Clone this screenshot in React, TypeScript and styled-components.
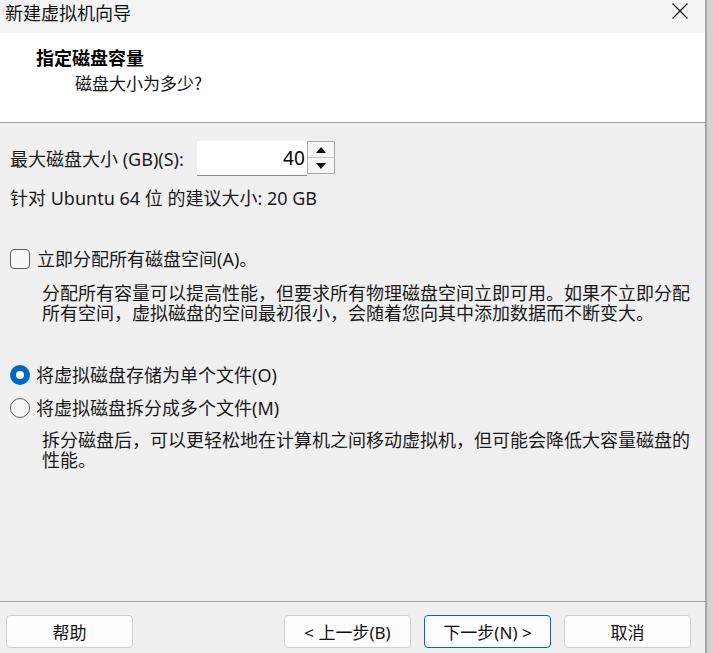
import React from 'react';
import styled, { createGlobalStyle } from 'styled-components';

const GlobalStyle = createGlobalStyle`
  html, body {
    margin: 0;
    padding: 0;
    background: #d2d2d2;
    font-family: "Noto Sans", "Noto Sans CJK SC", sans-serif;
    color: #1a1a1a;
    overflow: hidden;
  }
`;

// Window frame
const Window = styled.div`
  width: 705px;
  height: 653px;
  border-right: 2px solid #a6a6a6;
  display: flex;
  flex-direction: column;
  background: #f0f0f0;
  overflow: hidden;
`;

const TitleBar = styled.div`
  height: 33px;
  flex-shrink: 0;
  background: #f3f3f3;
  display: flex;
  justify-content: space-between;
  align-items: flex-start;
  padding: 0 17px 0 5px;
`;

const TitleText = styled.div`
  font-family: "Noto Sans CJK SC", sans-serif;
  font-size: 18px;
  line-height: 24px;
  color: #111;
`;

const CloseButton = styled.div`
  width: 16px;
  height: 16px;
  margin-top: 3px;
  display: flex;
`;

// Header panel
const Header = styled.div`
  height: 90px;
  box-sizing: border-box;
  flex-shrink: 0;
  background: #fff;
  border-bottom: 1px solid #a0a0a0;
  padding: 12px 0 0 36px;
`;

const HeaderTitle = styled.div`
  font-family: "Noto Sans CJK SC", sans-serif;
  font-weight: 700;
  font-size: 18px;
  line-height: 24px;
  color: #000;
`;

const HeaderSub = styled.div`
  font-family: "Noto Sans CJK SC", sans-serif;
  font-size: 17px;
  line-height: 22px;
  margin: 3px 0 0 39px;
  color: #111;
`;

// Main body
const Body = styled.div`
  flex: 1;
  display: flex;
  flex-direction: column;
  padding-left: 10px;
`;

const Row = styled.div<{ $top: number }>`
  display: flex;
  align-items: center;
  margin-top: ${(p) => p.$top}px;
  font-size: 18px;
  line-height: 20px;
  white-space: nowrap;
`;

const FieldLabel = styled.span`
  margin-right: 13px;
`;

const SpinBox = styled.div`
  display: flex;
  height: 35px;
`;

const SpinInput = styled.div`
  width: 108px;
  height: 34px;
  background: #fff;
  border-bottom: 1px solid #8a8a8a;
  font-size: 19px;
  line-height: 34px;
  text-align: right;
  padding-right: 2px;
  color: #000;
`;

const SpinButtons = styled.div`
  width: 26px;
  height: 31px;
  border: 1px solid #a8a8a8;
  display: flex;
  flex-direction: column;
  background: #f7f7f7;
`;

const SpinArrow = styled.div<{ $down?: boolean }>`
  flex: 1;
  display: flex;
  align-items: center;
  justify-content: center;
  border-top: ${(p) => (p.$down ? '1px solid #c8c8c8' : 'none')};
`;

const CheckBox = styled.div`
  width: 18px;
  height: 18px;
  flex-shrink: 0;
  border: 1px solid #5e5e5e;
  border-radius: 4px;
  background: #f7f7f7;
  margin-right: 7px;
`;

const Radio = styled.div<{ $checked?: boolean }>`
  width: ${(p) => (p.$checked ? '20px' : '18px')};
  height: ${(p) => (p.$checked ? '20px' : '18px')};
  flex-shrink: 0;
  border-radius: 50%;
  border: ${(p) => (p.$checked ? 'none' : '1px solid #5e5e5e')};
  background: ${(p) => (p.$checked ? '#0067c0' : '#f7f7f7')};
  margin-right: 6px;
  display: flex;
  align-items: center;
  justify-content: center;

  &::after {
    content: '';
    display: ${(p) => (p.$checked ? 'block' : 'none')};
    width: 8px;
    height: 8px;
    border-radius: 50%;
    background: #fff;
  }
`;

const Description = styled.div<{ $top: number }>`
  margin: ${(p) => p.$top}px 0 0 32px;
  font-family: "Noto Sans CJK SC", sans-serif;
  font-size: 18px;
  line-height: 20px;
  white-space: nowrap;
  color: #1a1a1a;
`;

// Footer with buttons
const Footer = styled.div`
  flex-shrink: 0;
  border-top: 1px solid #a0a0a0;
  padding: 13px 14px 5px 6px;
  display: flex;
  justify-content: space-between;
`;

const ButtonGroup = styled.div`
  display: flex;
  gap: 13px;
`;

const Button = styled.button<{ $primary?: boolean }>`
  width: 127px;
  height: 33px;
  box-sizing: border-box;
  background: #fdfdfd;
  border: 1px solid ${(p) => (p.$primary ? '#0067c0' : '#d0d0d0')};
  border-radius: 4px;
  font-family: "Noto Sans", "Noto Sans CJK SC", sans-serif;
  font-size: 17px;
  color: #111;
  padding: 0;
  cursor: pointer;
`;

const App: React.FC = () => {
  return (
    <>
      <GlobalStyle />
      <Window>
        <TitleBar>
          <TitleText>新建虚拟机向导</TitleText>
          <CloseButton>
            <svg width="16" height="16" viewBox="0 0 16 16">
              <path d="M0.5 0.5 L15.5 15.5 M15.5 0.5 L0.5 15.5" stroke="#111" strokeWidth="1.2" />
            </svg>
          </CloseButton>
        </TitleBar>
        <Header>
          <HeaderTitle>指定磁盘容量</HeaderTitle>
          <HeaderSub>磁盘大小为多少?</HeaderSub>
        </Header>
        <Body>
          <Row $top={18}>
            <FieldLabel>最大磁盘大小 (GB)(S):</FieldLabel>
            <SpinBox>
              <SpinInput>40</SpinInput>
              <SpinButtons>
                <SpinArrow>
                  <svg width="10" height="6" viewBox="0 0 10 6">
                    <path d="M0 6 L5 0 L10 6 Z" fill="#111" />
                  </svg>
                </SpinArrow>
                <SpinArrow $down>
                  <svg width="10" height="6" viewBox="0 0 10 6">
                    <path d="M0 0 L10 0 L5 6 Z" fill="#111" />
                  </svg>
                </SpinArrow>
              </SpinButtons>
            </SpinBox>
          </Row>
          <Row $top={12}>针对 Ubuntu 64 位 的建议大小: 20 GB</Row>
          <Row $top={41}>
            <CheckBox />
            立即分配所有磁盘空间(A)。
          </Row>
          <Description $top={13}>
            分配所有容量可以提高性能，但要求所有物理磁盘空间立即可用。如果不立即分配
            <br />
            所有空间，虚拟磁盘的空间最初很小，会随着您向其中添加数据而不断变大。
          </Description>
          <Row $top={43}>
            <Radio $checked />
            将虚拟磁盘存储为单个文件(O)
          </Row>
          <Row $top={13}>
            <Radio />
            将虚拟磁盘拆分成多个文件(M)
          </Row>
          <Description $top={11}>
            拆分磁盘后，可以更轻松地在计算机之间移动虚拟机，但可能会降低大容量磁盘的
            <br />
            性能。
          </Description>
        </Body>
        <Footer>
          <Button>帮助</Button>
          <ButtonGroup>
            <Button>&lt; 上一步(B)</Button>
            <Button $primary>下一步(N) &gt;</Button>
            <Button>取消</Button>
          </ButtonGroup>
        </Footer>
      </Window>
    </>
  );
};

export default App;
